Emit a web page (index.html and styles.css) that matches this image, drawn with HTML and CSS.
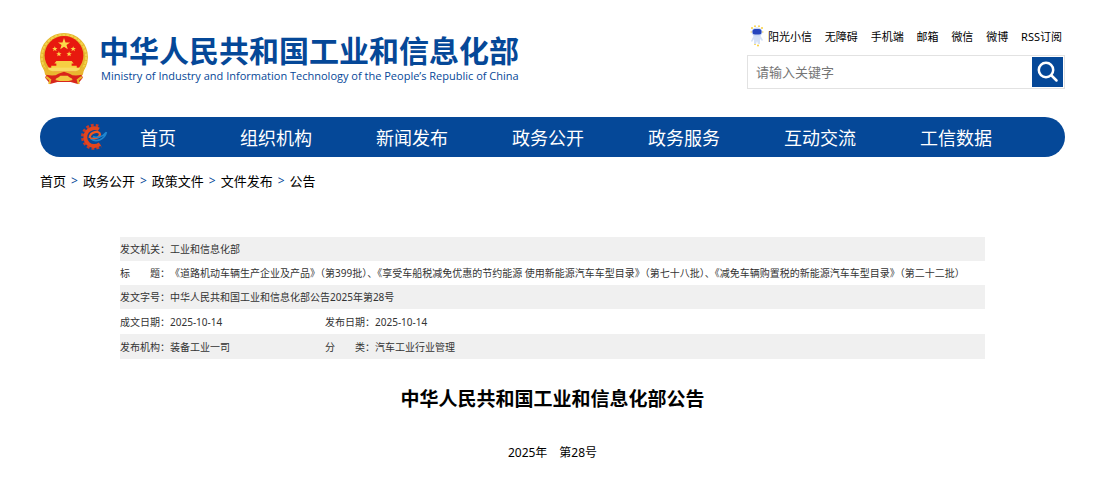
FILE: index.html
```html
<!DOCTYPE html>
<html lang="zh-CN">
<head>
<meta charset="utf-8">
<meta name="viewport" content="width=device-width, initial-scale=1">
<title>中华人民共和国工业和信息化部公告</title>
<link rel="stylesheet" href="styles.css">
</head>
<body>
<div class="page">
  <header class="header">
    <a class="brand" href="#">
      <svg class="emblem" viewBox="0 0 47 51" aria-hidden="true">
        <path d="M8 36 L39 36 L42 44 L37 50 L30 48 L17 48 L10 50 L5 44Z" fill="#d8261c"/>
        <circle cx="23.500" cy="23.500" r="23.500" fill="#e3b52c"/>
        <circle cx="23.500" cy="23.500" r="21.700" fill="none" stroke="#f4d24b" stroke-width="2" stroke-dasharray="3 1"/>
        <circle cx="23.500" cy="22" r="19" fill="#e8190f"/>
        <path d="M23.500 5l1.500 4.200h4.400l-3.500 2.600 1.300 4.200-3.700-2.500-3.700 2.500 1.300-4.200-3.500-2.600h4.400z" fill="#fbd94a"/>
        <g fill="#fbd94a">
          <path id="star" d="M14.500 13l.7 1.800h1.900l-1.500 1.200.6 1.900-1.700-1.200-1.700 1.200.6-1.900-1.500-1.200h1.900z"/>
          <use href="#star" x="4" y="5"/><use href="#star" x="14" y="5"/><use href="#star" x="18"/>
        </g>
        <path d="M16 27.500h15l2 2.500h-2v2h5v4H11v-4h5v-2h-2z" fill="#f6cf43"/>
        <path d="M8 34h31v4H8z" fill="#f8dc62"/>
        <path d="M3 32q8 7 15 6h11q7 1 15-6l-2 9q-5 4-12 3l-3-2h-7l-3 2q-7 1-12-3z" fill="#e9b730"/>
        <path d="M6 41q8 2 12-1l5.500-2 5.500 2q4 3 12 1l-3 6q-5 0-8-3h-13q-3 3-8 3z" fill="#d9231a"/>
        <path d="M15 46l5-4h7l5 4-4 1h-9z" fill="#f2c840"/>
        <path d="M6 43l4 3-1 4M41 43l-4 3 1 4" fill="none" stroke="#e9b52e" stroke-width="2"/>
      </svg>
      <span class="brand-text">
        <span class="brand-zh">中华人民共和国工业和信息化部</span>
        <span class="brand-en">Ministry of Industry and Information Technology of the People’s Republic of China</span>
      </span>
    </a>
    <div class="tools">
      <nav class="links" aria-label="快捷入口">
        <a class="mascot-link" href="#"><svg class="mascot" viewBox="0 0 14 22" aria-hidden="true">
          <g fill="#f8cf3c"><circle cx="2" cy="3" r="1"/><circle cx="5" cy="1.200" r=".9"/><circle cx="9" cy="1.200" r=".9"/><circle cx="12" cy="3" r="1"/><circle cx="1.300" cy="7" r=".8"/><circle cx="12.700" cy="7" r=".8"/><circle cx="5" cy="19" r="1"/><circle cx="8" cy="20.500" r="1"/></g>
          <path d="M4 10h6l3 5-1 1-2-2v5H8l-1-3-1 3H4v-5l-2 3-1-1z" fill="#d5e1f7"/>
          <ellipse cx="7" cy="7" rx="5.500" ry="4.500" fill="#c9d8f5"/>
          <rect x="2.500" y="4" width="9" height="5.500" rx="2.500" fill="#2645bd"/>
        </svg>阳光小信</a>
        <a href="#">无障碍</a><a href="#">手机端</a><a href="#">邮箱</a><a href="#">微信</a><a href="#">微博</a><a href="#">RSS订阅</a>
      </nav>
      <form class="search">
        <input class="search-input" type="text" placeholder="请输入关键字" aria-label="请输入关键字">
        <button class="search-button" type="button" aria-label="搜索">
          <svg viewBox="0 0 31 30" aria-hidden="true"><circle cx="14" cy="13" r="7.200"/><path d="M19.500 18.500l5 5"/></svg>
        </button>
      </form>
    </div>
  </header>

  <nav class="main-nav" aria-label="主导航">
    <svg class="nav-logo" viewBox="0 0 26 26" aria-hidden="true">
      <path d="M17 2.800A10.800 10.800 0 1 0 19.500 21.500" fill="none" stroke="#c93a26" stroke-width="2.600" stroke-dasharray="2.600 1.800"/>
      <path d="M17.500 6A8.300 8.300 0 1 0 18.500 19.500" fill="none" stroke="#e4451d" stroke-width="3.600"/>
      <path d="M9 14C9 8 18.500 6.500 18.500 10.500C18.500 14 13 15 9.500 14.200" fill="none" stroke="#f4591f" stroke-width="2"/>
      <path d="M10.500 15C15 18 23 15.500 24.500 8.500C21 13 15 14.500 12 12.500" fill="none" stroke="#1f86cf" stroke-width="1.500"/>
    </svg>
    <a href="#">首页</a><a href="#">组织机构</a><a href="#">新闻发布</a><a href="#">政务公开</a><a href="#">政务服务</a><a href="#">互动交流</a><a href="#">工信数据</a>
  </nav>

  <nav class="crumbs" aria-label="当前位置">
    <a href="#">首页</a><span>&gt;</span><a href="#">政务公开</a><span>&gt;</span><a href="#">政策文件</a><span>&gt;</span><a href="#">文件发布</a><span>&gt;</span><a href="#">公告</a>
  </nav>

  <main class="article">
    <table class="meta">
      <colgroup><col class="col-label"><col class="col-value"><col class="col-label"><col></colgroup>
      <tbody>
        <tr><th scope="row">发文机关：</th><td colspan="3">工业和信息化部</td></tr>
        <tr><th scope="row">标　　题：</th><td colspan="3">《道路机动车辆生产企业及产品》（第399批）、《享受车船税减免优惠的节约能源 使用新能源汽车车型目录》（第七十八批）、《减免车辆购置税的新能源汽车车型目录》（第二十二批）</td></tr>
        <tr><th scope="row">发文字号：</th><td colspan="3">中华人民共和国工业和信息化部公告2025年第28号</td></tr>
        <tr class="split"><th scope="row">成文日期：</th><td>2025-10-14</td><th scope="row">发布日期：</th><td>2025-10-14</td></tr>
        <tr class="split"><th scope="row">发布机构：</th><td>装备工业一司</td><th scope="row">分　　类：</th><td>汽车工业行业管理</td></tr>
      </tbody>
    </table>
    <h1 class="title">中华人民共和国工业和信息化部公告</h1>
    <p class="number">2025年　第28号</p>
  </main>
</div>
</body>
</html>
```
FILE: styles.css
```css
* { box-sizing: border-box; }

body {
  margin: 0;
  background: #fff;
  color: #000;
  font-family: "Noto Sans", "Noto Sans CJK SC", sans-serif;
}

a { color: inherit; text-decoration: none; }

.page { padding: 24px 30px 16px 40px; }

.header {
  display: flex;
  justify-content: space-between;
  align-items: flex-start;
}

.brand {
  display: flex;
  gap: 11px;
  padding-top: 9px;
  color: #054898;
}

.emblem { width: 48px; height: 52px; }

.brand-text { display: flex; flex-direction: column; white-space: nowrap; }

.brand-zh { font-size: 30px; font-weight: 700; line-height: 36px; }

.brand-en {
  padding-left: 2px;
  font-family: "Open Sans", "Noto Sans", sans-serif;
  font-size: 11px;
  font-weight: 500;
  line-height: 14px;
}

.tools { width: 318px; }

.links {
  display: flex;
  align-items: center;
  justify-content: space-between;
  height: 23px;
  padding: 0 3px;
  font-size: 11px;
  white-space: nowrap;
}

.mascot-link { display: flex; align-items: center; gap: 4px; }

.mascot { width: 14px; height: 22px; }

.search {
  display: flex;
  height: 34px;
  margin-top: 8px;
  padding: 1px;
  border: 1px solid #e2e2e2;
}

.search-input {
  flex: 1;
  min-width: 0;
  padding: 0 7px;
  border: 0;
  outline: 0;
  font-family: inherit;
  font-size: 13px;
}

.search-input::placeholder { color: #757575; }

.search-button {
  width: 31px;
  padding: 0;
  border: 0;
  background: #054898;
}

.search-button svg {
  display: block;
  width: 31px;
  height: 30px;
  fill: none;
  stroke: #fff;
  stroke-width: 2.5;
  stroke-linecap: round;
}

.main-nav {
  display: flex;
  align-items: center;
  gap: 64px;
  height: 40px;
  margin-top: 28px;
  padding-left: 40px;
  border-radius: 20px;
  background: #054898;
  color: #fff;
  font-size: 18px;
  white-space: nowrap;
}

.nav-logo { width: 28px; height: 28px; margin-right: -32px; }

.crumbs {
  display: flex;
  gap: 5px;
  margin-top: 14px;
  font-size: 13px;
  line-height: 20px;
}

.crumbs span { color: #054898; font-size: 12px; }

.article { margin: 46px 80px 0; }

.meta {
  width: 100%;
  table-layout: fixed;
  border-collapse: collapse;
  color: #333;
  font-size: 10px;
  line-height: 16px;
}

.col-label { width: 50px; }

.col-value { width: 155px; }

.meta th, .meta td {
  padding: 4px 0;
  font-weight: 400;
  text-align: left;
}

.meta .split th, .meta .split td { padding-top: 5px; }

.meta th { white-space: nowrap; }

.meta tr:nth-child(odd) { background: #f0f0f0; }

.title {
  margin: 26px 0 0;
  font-size: 19px;
  font-weight: 700;
  line-height: 28px;
  text-align: center;
}

.number {
  margin: 32px 0 0;
  font-size: 12px;
  line-height: 16px;
  text-align: center;
}
```
